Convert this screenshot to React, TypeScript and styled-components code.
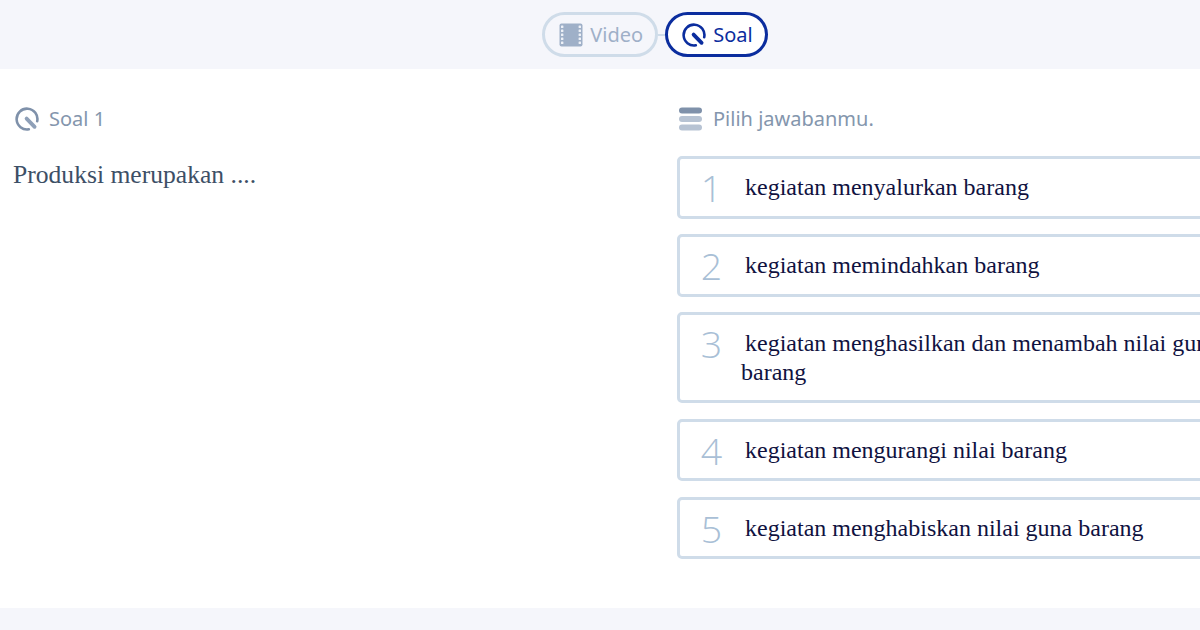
import * as React from 'react';
import styled, { createGlobalStyle } from 'styled-components';

const answers = [
	'kegiatan menyalurkan barang',
	'kegiatan memindahkan barang',
	'kegiatan menghasilkan dan menambah nilai guna barang',
	'kegiatan mengurangi nilai barang',
	'kegiatan menghabiskan nilai guna barang',
];

const GlobalStyle = createGlobalStyle`
	html, body {
		margin: 0;
		height: 100%;
		overflow: hidden;
		background: #f5f6fb;
		font-family: 'Noto Sans', 'Open Sans', sans-serif;
	}
`;

const Page = styled.div`
	width: 1200px;
	height: 630px;
	overflow: hidden;
`;

const TabBar = styled.nav`
	height: 69px;
	box-sizing: border-box;
	padding: 12px 0 0 110px;
	display: flex;
	justify-content: center;
	align-items: flex-start;
`;

const Tab = styled.div<{ $active?: boolean }>`
	height: 45px;
	box-sizing: border-box;
	display: flex;
	align-items: center;
	gap: 7px;
	padding: 0 12px 0 14px;
	border: 3px solid ${(p) => (p.$active ? '#0b2d9e' : '#cfdce9')};
	border-radius: 23px;
	background: ${(p) => (p.$active ? '#fff' : 'transparent')};
	color: ${(p) => (p.$active ? '#0b2d9e' : '#9fb0c8')};
	font-size: 20px;
`;

const Connector = styled.div`
	width: 7px;
	height: 2px;
	margin-top: 22px;
	background: #cfdce9;
`;

const Content = styled.main`
	height: 539px;
	background: #fff;
	display: flex;
`;

const LeftColumn = styled.section`
	width: 677px;
	flex: none;
	box-sizing: border-box;
	padding: 36px 13px 0;
`;

const RightColumn = styled.section`
	width: 613px;
	flex: none;
	padding-top: 36px;
`;

const ColumnHeader = styled.header<{ $inset: number }>`
	height: 27px;
	display: flex;
	align-items: center;
	gap: 10px;
	padding-left: ${(p) => p.$inset}px;
	color: #8496ad;
	font-size: 20px;
`;

const Question = styled.p`
	margin: 28px 0 0;
	font-family: 'Liberation Serif', serif;
	font-size: 25.6px;
	line-height: 29px;
	color: #3d4f66;
`;

const AnswerList = styled.div`
	margin-top: 24px;
	display: flex;
	flex-direction: column;
	gap: 15.4px;
`;

const AnswerCard = styled.div`
	box-sizing: border-box;
	display: flex;
	padding: 14px 20px 14px 0;
	border: 3px solid #cfdce9;
	border-radius: 5px;
	background: #fff;
`;

const AnswerNumber = styled.div`
	width: 61px;
	height: 28px;
	flex: none;
	box-sizing: border-box;
	padding-left: 2px;
	text-align: center;
	font-family: 'Open Sans', sans-serif;
	font-weight: 300;
	font-size: 37.5px;
	line-height: 30px;
	color: #a9bfd6;
`;

const AnswerText = styled.div`
	font-family: 'Liberation Serif', serif;
	font-size: 24px;
	line-height: 28.6px;
	text-indent: 4px;
	color: #10123f;
`;

function FilmIcon() {
	return (
		<svg width="24" height="24" viewBox="0 0 24 24" aria-hidden="true">
			<rect x="0.5" y="0.5" width="23" height="23" rx="2" fill="#9fb0c8" />
			{[2.5, 6.5, 10.5, 14.5, 18.5].map((y) => (
				<React.Fragment key={y}>
					<rect x="2" y={y} width="2.4" height="2.6" rx="0.6" fill="#eef1f7" />
					<rect x="19.6" y={y} width="2.4" height="2.6" rx="0.6" fill="#eef1f7" />
				</React.Fragment>
			))}
		</svg>
	);
}

function QuizIcon({ ring, hand }: { ring: string; hand: string }) {
	return (
		<svg width="24" height="24" viewBox="0 0 24 24" fill="none" aria-hidden="true">
			<path
				d="M13.8 22.3A10.4 10.4 0 1 1 22.2 14.2"
				stroke={ring}
				strokeWidth="2.6"
				strokeLinecap="round"
			/>
			<path d="M11.6 11.6L19.6 19.8" stroke={hand} strokeWidth="3.8" strokeLinecap="round" />
		</svg>
	);
}

function ListIcon() {
	return (
		<svg width="24" height="24" viewBox="0 0 24 24" aria-hidden="true">
			<rect y="0.5" width="23" height="6" rx="3" fill="#7f91aa" />
			<rect y="9" width="23" height="6" rx="3" fill="#b7c3d3" />
			<rect y="17.5" width="23" height="6" rx="3" fill="#b7c3d3" />
		</svg>
	);
}

export default function App() {
	return (
		<Page>
			<GlobalStyle />
			<TabBar>
				<Tab>
					<FilmIcon />
					Video
				</Tab>
				<Connector />
				<Tab $active>
					<QuizIcon ring="#0b2d9e" hand="#0b2d9e" />
					Soal
				</Tab>
			</TabBar>
			<Content>
				<LeftColumn>
					<ColumnHeader $inset={2}>
						<QuizIcon ring="#7f91aa" hand="#8fa0b8" />
						Soal 1
					</ColumnHeader>
					<Question>Produksi merupakan ....</Question>
				</LeftColumn>
				<RightColumn>
					<ColumnHeader $inset={2}>
						<ListIcon />
						Pilih jawabanmu.
					</ColumnHeader>
					<AnswerList>
						{answers.map((text, i) => (
							<AnswerCard key={text}>
								<AnswerNumber>{i + 1}</AnswerNumber>
								<AnswerText>{text}</AnswerText>
							</AnswerCard>
						))}
					</AnswerList>
				</RightColumn>
			</Content>
		</Page>
	);
}
